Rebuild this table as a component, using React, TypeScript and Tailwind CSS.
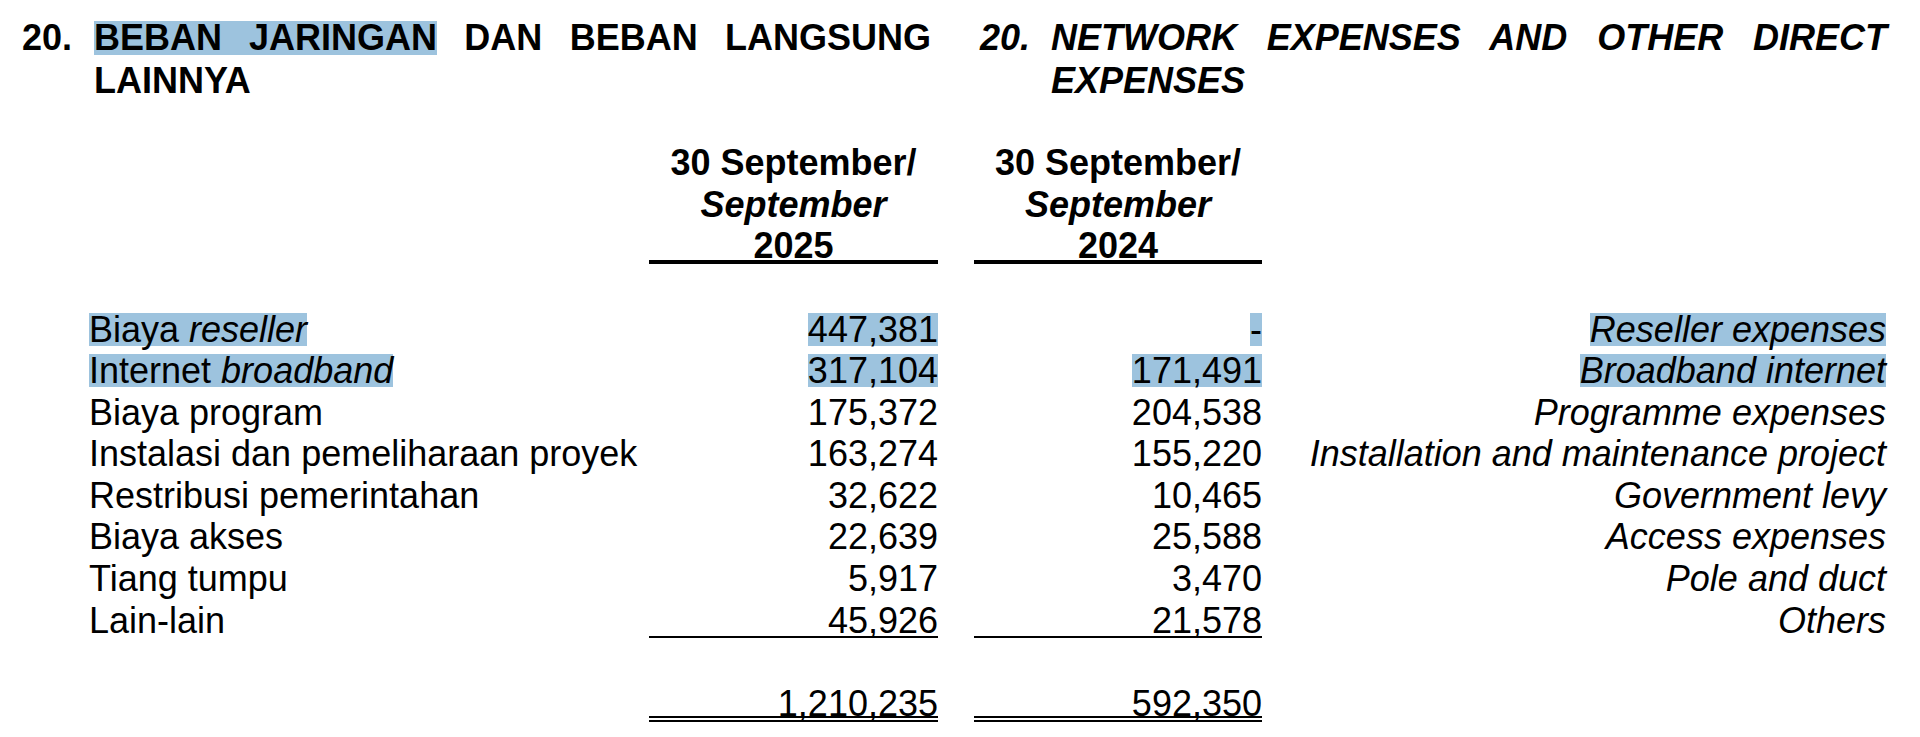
import type { ReactNode } from 'react'

type Line = 'none' | 'single' | 'double'

type ExpenseRow = {
  label: ReactNode
  current: string
  prior: string
  english: string
  marked?: boolean
  markPrior?: boolean
}

const ROWS: ExpenseRow[] = [
  {
    label: (
      <>
        Biaya <i>reseller</i>
      </>
    ),
    current: '447,381',
    prior: '-',
    english: 'Reseller expenses',
    marked: true,
    markPrior: true,
  },
  {
    label: (
      <>
        Internet <i>broadband</i>
      </>
    ),
    current: '317,104',
    prior: '171,491',
    english: 'Broadband internet',
    marked: true,
    markPrior: true,
  },
  { label: 'Biaya program', current: '175,372', prior: '204,538', english: 'Programme expenses' },
  {
    label: 'Instalasi dan pemeliharaan proyek',
    current: '163,274',
    prior: '155,220',
    english: 'Installation and maintenance project',
  },
  { label: 'Restribusi pemerintahan', current: '32,622', prior: '10,465', english: 'Government levy' },
  { label: 'Biaya akses', current: '22,639', prior: '25,588', english: 'Access expenses' },
  { label: 'Tiang tumpu', current: '5,917', prior: '3,470', english: 'Pole and duct' },
  { label: 'Lain-lain', current: '45,926', prior: '21,578', english: 'Others' },
]

// selection highlight, same blue as the pdf viewer
function Mark({ on, children }: { on?: boolean; children: ReactNode }) {
  if (!on) return <>{children}</>
  return <span className="inline-block bg-[#9dc3de] leading-[33px]">{children}</span>
}

function Amount({ value, line, marked }: { value: string; line: Line; marked?: boolean }) {
  const ruled =
    line === 'single'
      ? 'h-[38.5px] border-b-2 border-black'
      : line === 'double'
        ? 'h-[39px] border-b-[6px] border-double border-black'
        : 'h-[41.6px]'
  return (
    <div className={`w-full text-right whitespace-nowrap ${ruled}`}>
      <Mark on={marked}>{value}</Mark>
    </div>
  )
}

function HeaderCell({ year }: { year: string }) {
  return (
    <div className="h-[122px] border-b-4 border-black text-center font-bold whitespace-nowrap">
      <div>30 September/</div>
      <div className="italic">September</div>
      <div>{year}</div>
    </div>
  )
}

export default function App() {
  return (
    <div className="min-h-screen bg-white text-black font-['Liberation_Sans',Arial,sans-serif] text-[36px]">
      <div className="grid grid-cols-[909px_907px] gap-x-[49px] pl-[22px] pt-[16px] font-bold leading-[43px]">
        <div className="flex">
          <span className="w-[72px] shrink-0">20.</span>
          <p className="flex-1 text-justify">
            <span className="inline-block bg-[#9dc3de] leading-[34px] [word-spacing:17px]">BEBAN JARINGAN</span> DAN
            BEBAN LANGSUNG LAINNYA
          </p>
        </div>
        <div className="flex italic">
          <span className="w-[71px] shrink-0">20.</span>
          <p className="flex-1 text-justify">NETWORK EXPENSES AND OTHER DIRECT EXPENSES</p>
        </div>
      </div>

      <div className="pl-[89px] pr-[34px] mt-[40px] leading-[41.6px]">
        <div className="flex">
          <div className="w-[560px] shrink-0" />
          <div className="w-[289px] shrink-0">
            <HeaderCell year="2025" />
          </div>
          <div className="w-[288px] shrink-0 ml-[36px]">
            <HeaderCell year="2024" />
          </div>
        </div>

        <div className="mt-[44.5px]">
          {ROWS.map((row, index) => {
            const line: Line = index === ROWS.length - 1 ? 'single' : 'none'
            return (
              <div key={row.english} className="flex h-[41.6px]">
                <div className="w-[560px] shrink-0 whitespace-nowrap">
                  <Mark on={row.marked}>{row.label}</Mark>
                </div>
                <div className="w-[289px] shrink-0">
                  <Amount value={row.current} line={line} marked={row.marked} />
                </div>
                <div className="w-[288px] shrink-0 ml-[36px]">
                  <Amount value={row.prior} line={line} marked={row.markPrior} />
                </div>
                <div className="flex-1 text-right italic whitespace-nowrap">
                  <Mark on={row.marked}>{row.english}</Mark>
                </div>
              </div>
            )
          })}

          <div className="h-[41.6px]" />

          <div className="flex h-[41.6px]">
            <div className="w-[560px] shrink-0" />
            <div className="w-[289px] shrink-0">
              <Amount value="1,210,235" line="double" />
            </div>
            <div className="w-[288px] shrink-0 ml-[36px]">
              <Amount value="592,350" line="double" />
            </div>
            <div className="flex-1" />
          </div>
        </div>
      </div>
    </div>
  )
}
